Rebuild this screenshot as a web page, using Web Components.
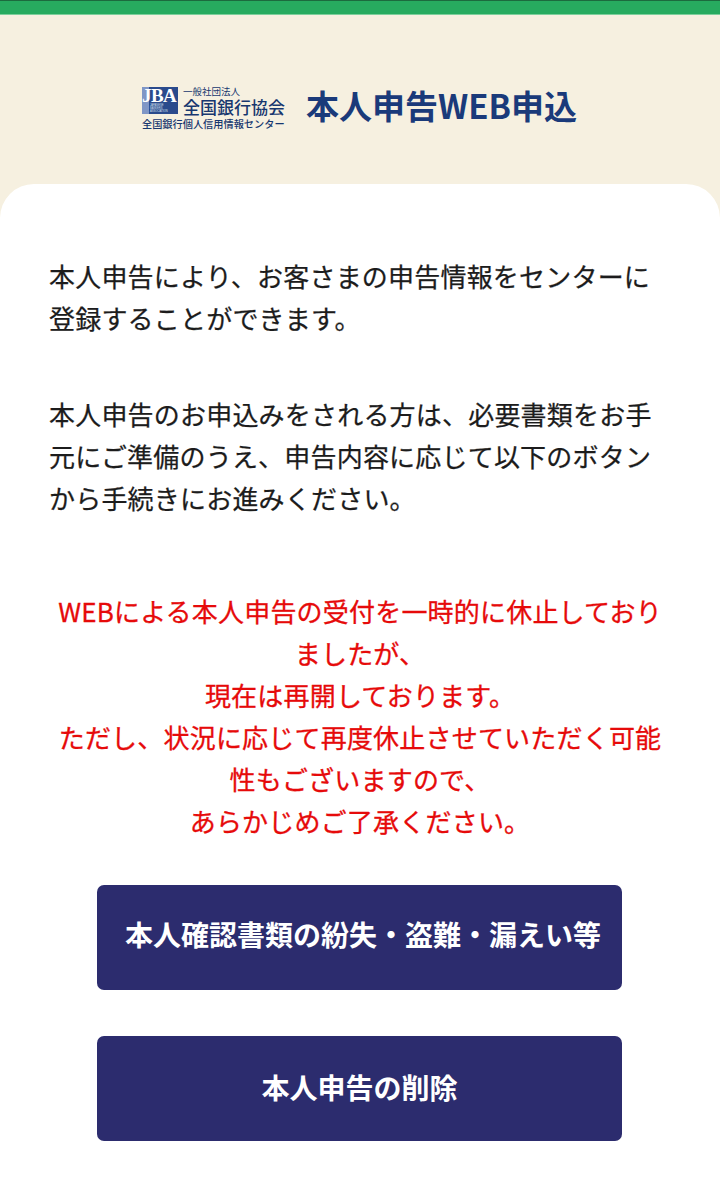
<!DOCTYPE html>
<html lang="ja">
<head>
<meta charset="utf-8">
<style>
html, body { margin: 0; padding: 0; background: #f6f0e0; }
body { font-family: "Noto Sans CJK JP", "Noto Sans", sans-serif; }
</style>
</head>
<body>
<jba-page>
	<jba-header slot="header"></jba-header>
	<jba-text>本人申告により、お客さまの申告情報をセンターに登録することができます。</jba-text>
	<jba-text style="--gap: 54px">本人申告のお申込みをされる方は、必要書類をお手元にご準備のうえ、申告内容に応じて以下のボタンから手続きにお進みください。</jba-text>
	<jba-notice>
		WEBによる本人申告の受付を一時的に休止しておりましたが、<br>
		現在は再開しております。<br>
		ただし、状況に応じて再度休止させていただく可能性もございますので、<br>
		あらかじめご了承ください。
	</jba-notice>
	<jba-button style="--top: 43px; --pad-left: 7px; --pad-bottom: 8px">本人確認書類の紛失・盗難・漏えい等</jba-button>
	<jba-button style="--top: 46px; --pad-bottom: 4px">本人申告の削除</jba-button>
</jba-page>

<script>
class JbaPage extends HTMLElement {
	connectedCallback() {
		this.attachShadow({ mode: "open" }).innerHTML = `
		<style>
			:host { display: block; width: 720px; height: 1200px; overflow: hidden; background: #f6f0e0; }
			.bar { height: 13px; background: #27ab5f; border-top: 1px solid #1c6b3e; border-bottom: 1px solid #7ccf9b; }
			.card { background: #fff; border-radius: 34px 34px 0 0; padding: 71px 49px 0 49px; height: 1016px; box-sizing: border-box; }
		</style>
		<div class="bar"></div>
		<slot name="header"></slot>
		<div class="card"><slot></slot></div>
		`
	}
}
customElements.define("jba-page", JbaPage)

class JbaHeader extends HTMLElement {
	connectedCallback() {
		this.attachShadow({ mode: "open" }).innerHTML = `
		<style>
			:host { display: flex; height: 169px; padding-top: 71px; box-sizing: border-box; padding-left: 142px; gap: 21px; align-items: flex-start; color: #17376f; font-family: "Noto Sans CJK JP", sans-serif; }
			.logo { width: 143px; display: grid; grid-template-columns: 36px auto; column-gap: 5px; }
			.mark { background: linear-gradient(90deg, #7f96c6 7px, #2a4a8c 7px); height: 27px; margin-top: 1px; display: flex; flex-direction: column; color: #fff; }
			.jba { font: 700 19px/17px "Liberation Serif", serif; letter-spacing: -.6px; white-space: nowrap; }
			.fine { display: block; font: 2.6px/3.1px "Liberation Sans", sans-serif; padding-left: 8px; color: #dfe6f3; white-space: nowrap; }
			.names { display: flex; flex-direction: column; }
			.org { font-size: 9.5px; line-height: 11px; white-space: nowrap; }
			.bank { font-size: 17px; line-height: 20px; white-space: nowrap; font-weight: 500; }
			.center { grid-column: 1 / 3; font-size: 10.2px; line-height: 13px; white-space: nowrap; font-weight: 500; }
			h1 { margin: -3px 0 0; font-size: 33px; line-height: 44px; font-weight: 700; color: #1a3a7a; white-space: nowrap; }
		</style>
		<div class="logo">
			<div class="mark"><span class="jba">JBA</span><span class="fine">JAPANESE</span><span class="fine">BANKERS</span><span class="fine">ASSOCIATION</span></div>
			<div class="names"><span class="org">一般社団法人</span><span class="bank">全国銀行協会</span></div>
			<div class="center">全国銀行個人信用情報センター</div>
		</div>
		<h1>本人申告WEB申込</h1>
		`
	}
}
customElements.define("jba-header", JbaHeader)

class JbaText extends HTMLElement {
	connectedCallback() {
		this.attachShadow({ mode: "open" }).innerHTML = `
		<style>
			:host { display: block; margin-top: var(--gap, 0); font-size: 26px; line-height: 42px; letter-spacing: .2px; color: #1c1c1c; -webkit-text-stroke: .25px #1c1c1c; }
		</style>
		<slot></slot>
		`
	}
}
customElements.define("jba-text", JbaText)

class JbaNotice extends HTMLElement {
	connectedCallback() {
		this.attachShadow({ mode: "open" }).innerHTML = `
		<style>
			:host { display: block; margin: 71px -1px 0; font-size: 26px; line-height: 42px; letter-spacing: .2px; color: #e60a0a; -webkit-text-stroke: .3px #e60a0a; text-align: center; }
		</style>
		<slot></slot>
		`
	}
}
customElements.define("jba-notice", JbaNotice)

class JbaButton extends HTMLElement {
	connectedCallback() {
		this.attachShadow({ mode: "open" }).innerHTML = `
		<style>
			:host { display: flex; align-items: center; justify-content: center; box-sizing: border-box; width: 525px; height: 105px; margin: var(--top, 0) 0 0 48px; padding: 0 0 var(--pad-bottom, 0) var(--pad-left, 0); background: #2c2c6e; border-radius: 7px; color: #fff; font-size: 28px; font-weight: 700; white-space: nowrap; }
		</style>
		<slot></slot>
		`
	}
}
customElements.define("jba-button", JbaButton)
</script>
</body>
</html>
